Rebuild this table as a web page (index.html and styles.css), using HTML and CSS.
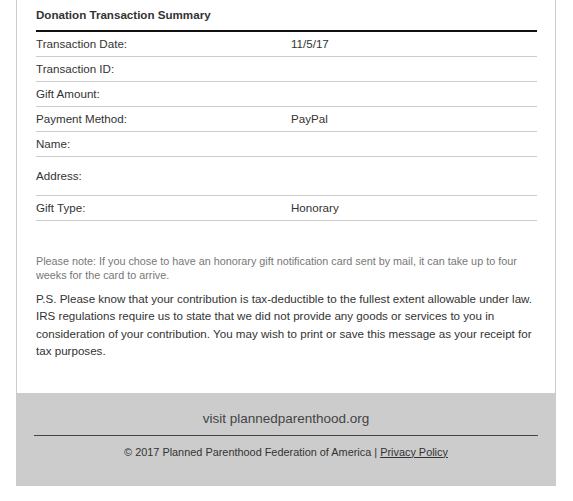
FILE: index.html
```html
<!DOCTYPE html>
<html lang="en">
<head>
<meta charset="utf-8">
<title>Donation Transaction Summary</title>
<link rel="stylesheet" href="styles.css">
</head>
<body>
<div class="wrap">
  <div class="card">
    <h2 class="title">Donation Transaction Summary</h2>
    <div class="rows">
      <div class="row"><div class="label">Transaction Date:</div><div class="value">11/5/17</div></div>
      <div class="row"><div class="label">Transaction ID:</div><div class="value"></div></div>
      <div class="row"><div class="label">Gift Amount:</div><div class="value"></div></div>
      <div class="row"><div class="label">Payment Method:</div><div class="value">PayPal</div></div>
      <div class="row"><div class="label">Name:</div><div class="value"></div></div>
      <div class="row row-tall"><div class="label">Address:</div><div class="value"></div></div>
      <div class="row"><div class="label">Gift Type:</div><div class="value">Honorary</div></div>
    </div>
    <p class="note">Please note: If you chose to have an honorary gift notification card sent by mail, it can take up to four weeks for the card to arrive.</p>
    <p class="ps">P.S. Please know that your contribution is tax-deductible to the fullest extent allowable under law. IRS regulations require us to state that we did not provide any goods or services to you in consideration of your contribution. You may wish to print or save this message as your receipt for tax purposes.</p>
  </div>
  <div class="footer">
    <div class="visit">visit plannedparenthood.org</div>
    <div class="copy">© 2017 Planned Parenthood Federation of America | <a class="link" href="#">Privacy Policy</a></div>
  </div>
</div>
</body>
</html>
```

FILE: styles.css
```css
html, body {
  margin: 0;
  padding: 0;
  background: #ffffff;
}

body {
  font-family: "Liberation Sans", Arial, sans-serif;
  color: #333333;
}

.wrap {
  width: 540px;
  margin-left: 16px;
}

.card {
  border-left: 1px solid #cccccc;
  border-right: 1px solid #cccccc;
  padding: 8px 18px 33px 19px;
}

.title {
  margin: 0;
  font-size: 11.6px;
  line-height: 14px;
  font-weight: bold;
  color: #333333;
  padding-bottom: 8px;
  border-bottom: 2px solid #111111;
}

.rows {
  display: flex;
  flex-direction: column;
}

.row {
  display: grid;
  grid-template-columns: 255px 1fr;
  align-items: center;
  padding: 5px 0;
  min-height: 14px;
  border-bottom: 1px solid #cccccc;
  font-size: 11.6px;
  line-height: 14px;
}

.row-tall {
  min-height: 28px;
}

.note {
  margin: 33px 0 0;
  font-size: 10.8px;
  line-height: 14px;
  color: #777777;
}

.ps {
  margin: 8px 0 0;
  font-size: 11.6px;
  line-height: 17.4px;
  color: #333333;
}

.footer {
  background: #cccccc;
  padding: 18px 18px 27px;
  text-align: center;
}

.visit {
  font-size: 13.5px;
  line-height: 16px;
  color: #444444;
  padding-bottom: 8px;
  border-bottom: 1px solid #444444;
}

.copy {
  margin-top: 10px;
  font-size: 10.9px;
  line-height: 13px;
  color: #333333;
}

.link {
  color: #333333;
  text-decoration: underline;
}
```
